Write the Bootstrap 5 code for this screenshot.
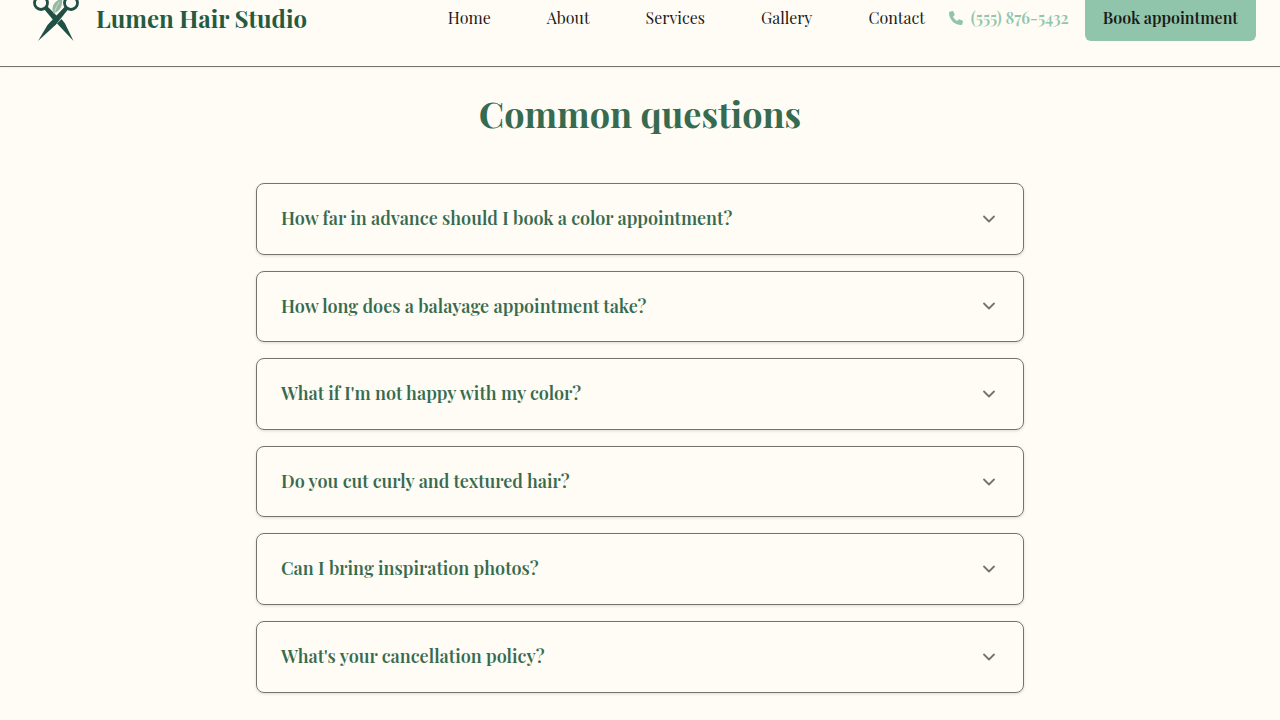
<!DOCTYPE html>
<html lang="en">
<head>
<meta charset="utf-8">
<meta name="viewport" content="width=device-width, initial-scale=1">
<title>Lumen Hair Studio – Common questions</title>
<link href="https://cdn.jsdelivr.net/npm/bootstrap@5.3.0/dist/css/bootstrap.min.css" rel="stylesheet">
<style>
  :root {
    --cream: #fffcf5;
    --forest: #245b42;
    --pine: #376b50;
    --mint: #90c5ab;
    --ink: #1c1917;
    --stone: #78716c;
  }
  body { background: var(--cream); color: var(--ink); font-family: "Playfair Display", "Liberation Serif", serif; }
  a { text-decoration: none; }
  .site-header { margin-top: -30px; min-height: 97px; border-bottom: 1px solid var(--stone); box-shadow: 0 1px 2px rgba(0, 0, 0, .06); }
  .brand-name { color: var(--forest); font-size: 24px; line-height: 31px; font-weight: 700; }
  .site-nav { gap: 56px; }
  .site-nav a { color: var(--ink); font-size: 16px; line-height: 24px; }
  .phone-link { color: var(--mint); font-size: 16px; line-height: 24px; font-weight: 600; }
  .book-btn { background: var(--mint); color: var(--ink); font-size: 16px; line-height: 24px; font-weight: 600; padding: 11px 18px; border: 0; border-radius: 6px; }
  .book-btn:hover { background: var(--pine); color: var(--cream); }
  .faq-title { color: var(--pine); font-size: 36px; line-height: 44px; font-weight: 700; }
  .faq-list { max-width: 768px; }
  .faq-item { border: 1px solid var(--stone); border-radius: 8px; box-shadow: 0 1px 3px rgba(0, 0, 0, .14); }
  .faq-item h3 { font-size: 18px; }
  .faq-item button { background: none; border: 0; color: var(--pine); font-weight: 600; }
</style>
</head>
<body>
<header class="site-header d-flex align-items-center justify-content-between px-4">
  <a href="#" class="d-flex align-items-center gap-2">
    <svg width="64" height="64" viewBox="0 0 64 64" aria-hidden="true">
      <g fill="none" stroke="#1f4f45" stroke-width="2.800"><circle cx="17" cy="17" r="6.500"/><circle cx="47" cy="17" r="6.500"/></g>
      <path fill="#1f4f45" d="M20 23l3-3 11.500 11.500-4.500 3.500z"/>
      <path fill="#1f4f45" d="M14 55L23.500 39 41 20.500l3 3L32 38.500z"/>
      <path fill="#1f4f45" d="M33 37.500l4.500-4.500L41 37.500 49.500 55z"/>
      <path fill="#93b9a0" d="M29.500 27.500c-3-8 1-12 8.500-15.500 1 7.500-1.500 13-8.500 15.500z"/>
      <path fill="none" stroke="#e4ebdc" stroke-width=".7" d="M30.500 26q1.500-6 5-10"/>
    </svg>
    <span class="brand-name">Lumen Hair Studio</span>
  </a>
  <div class="d-flex align-items-center">
    <nav class="site-nav d-flex me-4" aria-label="Main">
      <a href="#">Home</a><a href="#">About</a><a href="#">Services</a><a href="#">Gallery</a><a href="#">Contact</a>
    </nav>
    <a href="tel:5558765432" class="phone-link d-flex align-items-center gap-2 me-3">
      <svg width="14" height="14" viewBox="0 0 512 512" fill="currentColor" aria-hidden="true"><path d="M164.900 24.600c-7.700-18.600-28-28.500-47.400-23.200l-88 24C12.100 30.200 0 46 0 64c0 247.400 200.600 448 448 448 18 0 33.800-12.100 38.600-29.500l24-88c5.300-19.400-4.600-39.700-23.200-47.400l-96-40c-16.300-6.800-35.200-2.100-46.300 11.600L304.700 368C234.300 334.700 177.300 277.700 144 207.300L193.300 167c13.700-11.200 18.400-30 11.600-46.300l-40-96z"/></svg>
      <span>(555) 876-5432</span>
    </a>
    <button type="button" class="book-btn">Book appointment</button>
  </div>
</header>
<main class="px-4 pb-4">
  <h2 class="faq-title text-center mt-4 mb-0">Common questions</h2>
  <div class="faq-list mx-auto d-flex flex-column gap-3 mt-5" id="faq"></div>
</main>
<script>
  const questions = [
    "How far in advance should I book a color appointment?",
    "How long does a balayage appointment take?",
    "What if I'm not happy with my color?",
    "Do you cut curly and textured hair?",
    "Can I bring inspiration photos?",
    "What's your cancellation policy?"
  ];
  document.getElementById("faq").innerHTML = questions.map(q => `
    <div class="faq-item"><h3 class="m-0"><button type="button" aria-expanded="false" class="d-flex w-100 align-items-center justify-content-between text-start p-4">
      <span>${q}</span>
      <svg width="20" height="20" viewBox="0 0 20 20" fill="none" stroke="#78716c" stroke-width="1.800" stroke-linecap="round" stroke-linejoin="round" aria-hidden="true"><path d="M5 7.500l5 5 5-5"/></svg>
    </button></h3></div>`).join("");
</script>
<script src="https://cdn.jsdelivr.net/npm/bootstrap@5.3.0/dist/js/bootstrap.bundle.min.js"></script>
</body>
</html>
